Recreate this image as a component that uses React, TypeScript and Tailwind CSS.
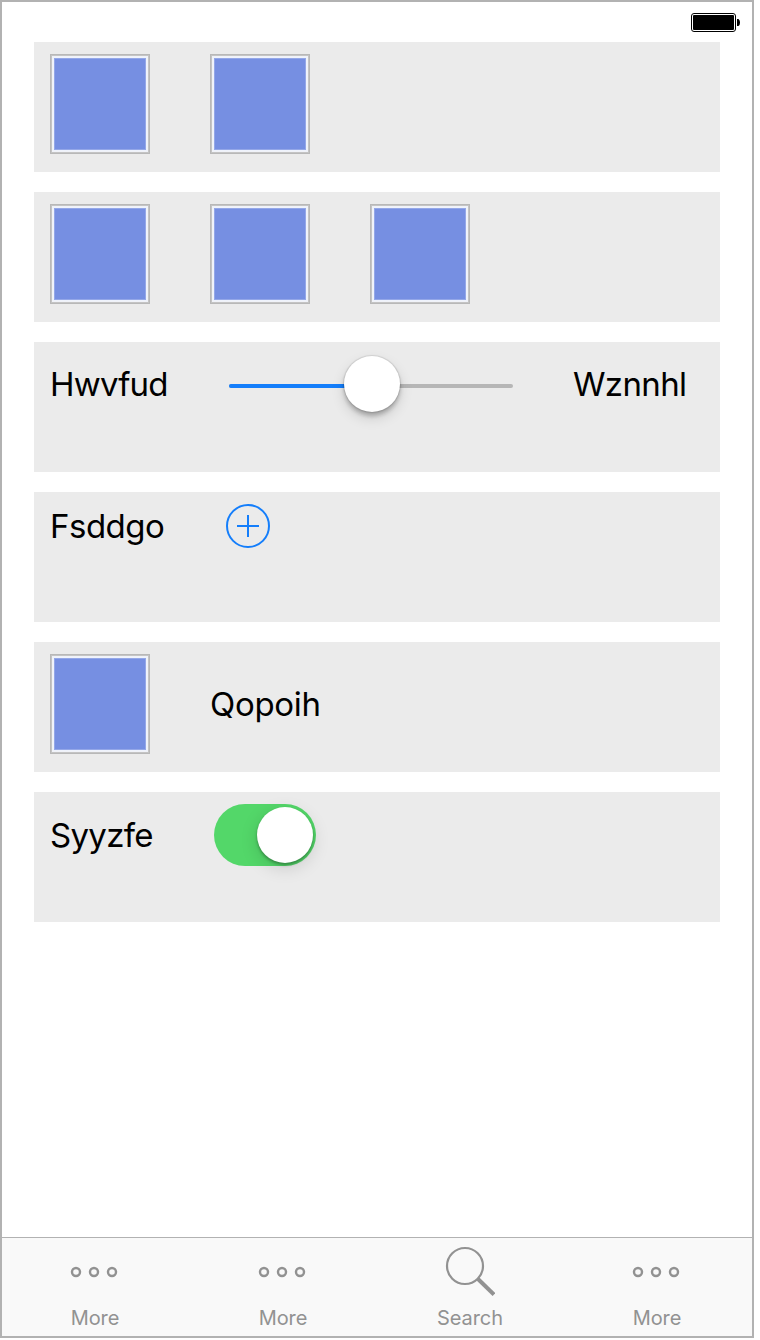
import type { ReactNode } from "react";

function Row({ children }: { children: ReactNode }) {
  return <div className="flex h-[130px] w-[686px] items-start bg-[#ebebeb] px-4 pt-3">{children}</div>;
}

function Tile() {
  return (
    <div className="mr-[60px] size-[100px] border border-[#b8b8b8] bg-[#f0f2f8]">
      <div className="size-full border border-[#c4c4c4] p-px">
        <div className="size-full border border-[#eff3fc]">
          <div className="size-full border border-[#94a7e8] bg-[#768fe2]" />
        </div>
      </div>
    </div>
  );
}

function Slider() {
  return (
    <div className="relative mt-[18px] ml-[61px] flex h-1 w-[284px] rounded-full bg-[#b6b6b6]">
      <div className="h-1 w-1/2 rounded-l-full bg-[#147efb]" />
      <div className="absolute -top-7 left-[115px] size-14 rounded-full bg-white shadow-[0_0_1px_1px_rgba(0,0,0,0.1),0_6px_14px_rgba(0,0,0,0.14),0_4px_4px_rgba(0,0,0,0.22)]" />
    </div>
  );
}

function AddButton() {
  return (
    <button className="ml-[62px] block size-11">
      <svg viewBox="0 0 44 44" className="block size-11" fill="none" stroke="#147efb" strokeWidth="2">
        <circle cx="22" cy="22" r="21" />
        <path d="M11 22h22M22 11v22" />
      </svg>
    </button>
  );
}

function Toggle() {
  return (
    <div className="ml-[62px] flex h-[62px] w-[102px] items-center justify-end rounded-full bg-[#53d769] pr-[3px]">
      <div className="size-14 rounded-full bg-white shadow-[0_5px_18px_rgba(0,0,0,0.14),0_2px_3px_rgba(0,0,0,0.3)]" />
    </div>
  );
}

function MoreIcon() {
  return (
    <svg viewBox="0 0 50 50" className="block size-[50px]" fill="none" stroke="#929292" strokeWidth="2.4">
      <circle cx="7" cy="26" r="4" />
      <circle cx="25" cy="26" r="4" />
      <circle cx="43" cy="26" r="4" />
    </svg>
  );
}

function SearchIcon() {
  return (
    <svg viewBox="0 0 50 50" className="block size-[50px]" fill="none" stroke="#929292">
      <circle cx="20" cy="20" r="18" strokeWidth="2.2" />
      <path d="M33 33L49 48.6" strokeWidth="4" />
    </svg>
  );
}

function Tab({ icon, label, box, text }: { icon: ReactNode; label: string; box: string; text: string }) {
  return (
    <div className={`flex flex-col items-center pt-2 ${box}`}>
      {icon}
      <span className={`mt-[10px] text-[20px] leading-6 text-[#929292] ${text}`}>{label}</span>
    </div>
  );
}

const label = "block whitespace-nowrap text-[33px] leading-10 text-black";

export default function App() {
  return (
    <div className="h-[1340px] w-[760px] overflow-hidden bg-white font-['Inter','Liberation_Sans',sans-serif]">
      <div className="flex h-[1338px] w-[754px] flex-col border-2 border-[#b2b2b2]">
        <div className="flex h-10 items-start justify-end pt-[11px] pr-3">
          <svg viewBox="0 0 49 19" className="block h-[19px] w-[49px]">
            <rect x="0.5" y="0.5" width="44" height="18" rx="2.5" fill="white" stroke="black" />
            <rect x="2" y="2" width="41" height="15" rx="1" fill="black" />
            <path d="M46 6h1.5q1.5 1 1.5 3.5t-1.5 3.5H46z" fill="black" />
          </svg>
        </div>
        <div className="flex flex-1 flex-col gap-5 pl-8">
          <Row><Tile /><Tile /></Row>
          <Row><Tile /><Tile /><Tile /></Row>
          <Row>
            <span className={`${label} mt-[10px] w-[118px] tracking-[-0.8px]`}>Hwvfud</span>
            <div className="pt-3"><Slider /></div>
            <span className={`${label} mt-[10px] ml-[60px] tracking-[-0.65px]`}>Wznnhl</span>
          </Row>
          <Row>
            <span className={`${label} mt-[2px] w-[114px] tracking-[-0.5px]`}>Fsddgo</span>
            <AddButton />
          </Row>
          <Row>
            <Tile />
            <span className={`${label} mt-[30px] tracking-[-0.3px]`}>Qopoih</span>
          </Row>
          <Row>
            <span className={`${label} mt-[11px] w-[102px] tracking-[-0.7px]`}>Syyzfe</span>
            <Toggle />
          </Row>
        </div>
        <div className="flex h-[99px] border-t border-[#b2b2b2] bg-[#f9f9f9]">
          <Tab icon={<MoreIcon />} label="More" box="w-[188px] pr-1" text="ml-[2px] tracking-[-0.15px]" />
          <Tab icon={<MoreIcon />} label="More" box="w-[188px] pr-1" text="ml-[2px] tracking-[-0.15px]" />
          <Tab icon={<SearchIcon />} label="Search" box="w-[187px] pr-[3px]" text="tracking-[-0.05px]" />
          <Tab icon={<MoreIcon />} label="More" box="w-[187px] pr-[5px]" text="ml-[2px] tracking-[-0.15px]" />
        </div>
      </div>
    </div>
  );
}
